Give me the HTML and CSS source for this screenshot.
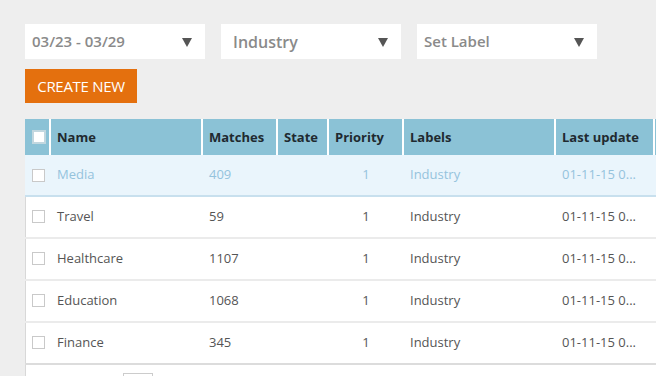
FILE: index.html
```html
<!DOCTYPE html>
<html lang="en">
<head>
    <meta charset="UTF-8">
    <title>Labels</title>
    <link rel="stylesheet" href="styles.css">
</head>
<body>
    <div class="filters">
        <div class="select">03/23 - 03/29<span class="arrow"></span></div>
        <div class="select select-wide">Industry<span class="arrow"></span></div>
        <div class="select">Set Label<span class="arrow"></span></div>
    </div>

    <button class="create">CREATE NEW</button>

    <div class="grid-wrap">
        <table class="grid">
            <colgroup>
                <col style="width: 25px">
                <col style="width: 152px">
                <col style="width: 75px">
                <col style="width: 51px">
                <col style="width: 75px">
                <col style="width: 152px">
                <col style="width: 99px">
                <col>
            </colgroup>
            <thead>
                <tr>
                    <th class="chk"><span class="box head-box"></span></th>
                    <th>Name</th>
                    <th>Matches</th>
                    <th>State</th>
                    <th>Priority</th>
                    <th>Labels</th>
                    <th>Last update</th>
                    <th></th>
                </tr>
            </thead>
            <tbody>
                <tr class="selected">
                    <td class="chk"><span class="box"></span></td>
                    <td>Media</td>
                    <td>409</td>
                    <td></td>
                    <td class="num">1</td>
                    <td>Industry</td>
                    <td>01-11-15 0...</td>
                    <td></td>
                </tr>
                <tr>
                    <td class="chk"><span class="box"></span></td>
                    <td>Travel</td>
                    <td>59</td>
                    <td></td>
                    <td class="num">1</td>
                    <td>Industry</td>
                    <td>01-11-15 0...</td>
                    <td></td>
                </tr>
                <tr>
                    <td class="chk"><span class="box"></span></td>
                    <td>Healthcare</td>
                    <td>1107</td>
                    <td></td>
                    <td class="num">1</td>
                    <td>Industry</td>
                    <td>01-11-15 0...</td>
                    <td></td>
                </tr>
                <tr>
                    <td class="chk"><span class="box"></span></td>
                    <td>Education</td>
                    <td>1068</td>
                    <td></td>
                    <td class="num">1</td>
                    <td>Industry</td>
                    <td>01-11-15 0...</td>
                    <td></td>
                </tr>
                <tr>
                    <td class="chk"><span class="box"></span></td>
                    <td>Finance</td>
                    <td>345</td>
                    <td></td>
                    <td class="num">1</td>
                    <td>Industry</td>
                    <td>01-11-15 0...</td>
                    <td></td>
                </tr>
            </tbody>
        </table>
        <div class="pager">
            <span class="page-input"></span>
        </div>
    </div>
</body>
</html>
```

FILE: styles.css
```css
body {
    margin: 0;
    padding: 24px 0 0 25px;
    background-color: #eeeeee;
    font-family: "Open Sans", "Liberation Sans", sans-serif;
    overflow: hidden;
    height: 352px;
}

/* Filter dropdowns */
.filters {
    display: flex;
    gap: 16px;
}

.select {
    position: relative;
    width: 180px;
    height: 35px;
    box-sizing: border-box;
    padding: 0 7px;
    background-color: #fff;
    color: #8a8a8a;
    font-size: 15px;
    font-weight: 600;
    line-height: 35px;
}

.select-wide {
    padding-left: 12px;
    font-size: 16px;
    line-height: 37px;
}

.arrow {
    position: absolute;
    right: 13px;
    top: 14px;
    width: 0;
    height: 0;
    border-left: 5px solid transparent;
    border-right: 5px solid transparent;
    border-top: 9px solid #555;
}

.create {
    display: block;
    margin-top: 10px;
    width: 112px;
    height: 34px;
    padding: 0;
    border: none;
    background-color: #e4700e;
    color: #fff;
    font-family: "Open Sans", "Liberation Sans", sans-serif;
    font-size: 15px;
    letter-spacing: -0.3px;
}

/* Table */
.grid-wrap {
    margin-top: 16px;
    width: 720px;
    background-color: #fff;
    border-left: 1px solid #d8d8d8;
}

.grid {
    width: 720px;
    border-collapse: collapse;
    table-layout: fixed;
    margin-left: -1px;
}

.grid th {
    height: 36px;
    padding: 0 6px;
    background-color: #8bc2d6;
    color: #1f2a30;
    font-size: 13px;
    font-weight: 700;
    text-align: left;
    border-left: 2px solid #fff;
    box-sizing: border-box;
}

.grid th:first-child {
    border-left: none;
}

.grid td {
    height: 42px;
    padding: 0 6px 3px 7px;
    color: #555;
    font-size: 13px;
    border-top: 2px solid #ebebeb;
    box-sizing: border-box;
    white-space: nowrap;
}

.grid tbody tr:first-child td {
    border-top: none;
}

.grid .num {
    text-align: center;
}

.grid .chk {
    padding: 0 0 1px 7px;
}

.grid tr.selected td {
    height: 41px;
    padding-bottom: 2px;
    background-color: #eaf5fc;
    color: #95c3dc;
    border-bottom: 2px solid #c8e0ee;
}

.grid tr.selected td.chk {
    padding-bottom: 0;
}

.grid tbody tr:last-child td {
    border-bottom: 2px solid #dcdcdc;
}

.box {
    display: block;
    width: 11px;
    height: 11px;
    border: 1px solid #c9c9c9;
    background-color: #fff;
}

.head-box {
    width: 10px;
    height: 10px;
    border: 2px solid #c2d7df;
}

.pager {
    height: 20px;
    position: relative;
}

.page-input {
    position: absolute;
    left: 97px;
    top: 8px;
    width: 28px;
    height: 20px;
    border: 1px solid #ccc;
}
```
